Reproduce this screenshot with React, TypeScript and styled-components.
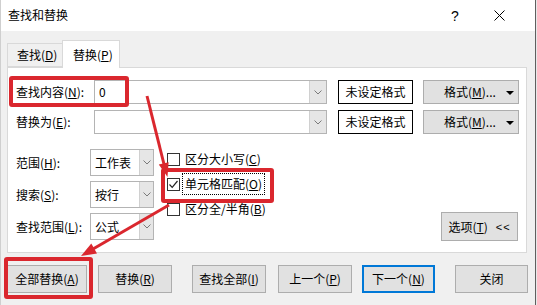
import React from 'react';
import styled, { createGlobalStyle } from 'styled-components';

const Global = createGlobalStyle`
  html, body { margin: 0; padding: 0; }
  body {
    width: 537px; height: 305px; overflow: hidden;
    background: #e8e8e8;
    font-family: "Noto Sans CJK SC", "Noto Sans", sans-serif;
    font-size: 12px; color: #000;
  }
  u { text-decoration: underline; text-underline-offset: 1px; }
`;

const RED = '#da272e';

const Window = styled.div`
  position: relative;
  width: 536px; height: 305px;
  box-sizing: border-box;
  border-left: 1px solid #cfcfcf;
  border-right: 1px solid #5f5f5f;
  background: #f0f0f0;
  display: flex; flex-direction: column;
`;

const TitleBar = styled.div`
  height: 31px; background: #fff;
  display: flex; align-items: center;
  padding-left: 7px; padding-right: 14px;
`;
const Title = styled.div`
  flex: 1; font-size: 12px; line-height: 16px; margin-top: -1px;
`;
const TitleBtn = styled.div`
  width: 44px; height: 31px;
  display: flex; align-items: center; justify-content: center;
  font-family: "Liberation Sans", sans-serif; font-size: 14px;
`;

const TabRow = styled.div`
  height: 36px; display: flex; align-items: flex-end;
  padding-left: 6px;
`;
const Tab = styled.div<{ $active?: boolean }>`
  box-sizing: border-box;
  height: ${p => (p.$active ? 28 : 24)}px;
  width: ${p => (p.$active ? 58 : 56)}px;
  background: ${p => (p.$active ? '#fff' : '#f0f0f0')};
  border: 1px solid #d9d9d9;
  border-bottom: ${p => (p.$active ? 'none' : '1px solid #d9d9d9')};
  margin-bottom: ${p => (p.$active ? -1 : 0)}px;
  margin-left: ${p => (p.$active ? -1 : 0)}px;
  position: relative; z-index: ${p => (p.$active ? 2 : 1)};
  display: flex; align-items: center;
  padding-left: ${p => (p.$active ? 10 : 9)}px;
  padding-top: ${p => (p.$active ? 1 : 0)}px;
  line-height: 16px;
`;

const Panel = styled.div`
  box-sizing: border-box;
  margin: 0 8px 0 6px;
  height: 186px;
  background: #fff;
  border: 1px solid #d9d9d9;
  padding: 12px 0 0 8px;
  display: flex; flex-direction: column;
`;

const FieldRow = styled.div`
  display: flex; align-items: center;
  height: 24px; margin-bottom: 6px;
`;
const Label = styled.div<{ $w: number }>`
  width: ${p => p.$w}px; flex: none; line-height: 16px;
`;
const Combo = styled.div<{ $w: number; $h: number }>`
  box-sizing: border-box;
  width: ${p => p.$w}px; height: ${p => p.$h}px;
  border: 1px solid #b4b4b4;
  display: flex; flex: none;
  background: #fff;
`;
const ComboText = styled.div`
  flex: 1; display: flex; align-items: center;
  padding-left: 4px; line-height: 16px;
`;
const ComboArrow = styled.div<{ $w: number }>`
  width: ${p => p.$w}px; flex: none;
  background: #e6e6e6;
  border-left: 1px solid #d0d0d0;
  display: flex; align-items: center; justify-content: center;
`;
const FormatPreview = styled.div`
  box-sizing: border-box;
  width: 75px; height: 24px; margin-left: 11px;
  border: 1px solid #000;
  display: flex; align-items: center; justify-content: center;
  line-height: 16px;
`;
const FormatButton = styled.div`
  box-sizing: border-box;
  width: 96px; height: 24px; margin-left: 10px;
  background: #e1e1e1; border: 1px solid #adadad;
  display: flex; align-items: center;
  padding-left: 20px; line-height: 16px;
  position: relative;
`;
const Caret = styled.div`
  position: absolute; right: 4px; top: 10px;
  width: 0; height: 0;
  border-left: 4px solid transparent; border-right: 4px solid transparent;
  border-top: 4px solid #000;
`;

const Options = styled.div`
  display: flex; margin-top: 9px; height: 91px;
`;
const SelectCol = styled.div`
  display: flex; flex-direction: column; gap: 5px;
`;
const SelectRow = styled.div`
  display: flex; align-items: center; height: 27px;
`;
const CheckCol = styled.div`
  display: flex; flex-direction: column; gap: 5px;
  margin-left: 13px;
`;
const CheckRow = styled.div`
  display: flex; align-items: center; height: 20px;
`;
const Box = styled.div`
  box-sizing: border-box;
  width: 13px; height: 13px; flex: none;
  border: 1px solid #333; background: #fff;
  display: flex; align-items: center; justify-content: center;
`;
const CheckLabel = styled.div<{ $focus?: boolean }>`
  margin-left: 2px; padding: 2px 2px;
  border: 1px dotted ${p => (p.$focus ? '#000' : 'transparent')};
  line-height: 16px; white-space: nowrap;
`;
const OptionsButton = styled.div`
  box-sizing: border-box;
  margin-left: auto; margin-right: 8px; align-self: flex-end;
  width: 77px; height: 29px;
  background: #e1e1e1; border: 1px solid #adadad;
  display: flex; align-items: center; justify-content: center;
  line-height: 16px; margin-bottom: -1px;
`;
const Lt = styled.span`
  font-family: "Liberation Sans", sans-serif; font-size: 11px; margin-left: 8px; letter-spacing: 1px;
`;

const BottomBar = styled.div`
  display: flex; padding: 12px 0 0 6px;
`;
const Button = styled.div<{ $w: number; $ml: number; $default?: boolean }>`
  box-sizing: border-box;
  width: ${p => p.$w}px; height: 28px; margin-left: ${p => p.$ml}px;
  background: #e1e1e1;
  border: ${p => (p.$default ? '2px solid #0078d7' : '1px solid #adadad')};
  display: flex; align-items: center; justify-content: center;
  line-height: 16px;
`;

const Highlight = styled.div<{ $x: number; $y: number; $w: number; $h: number }>`
  position: absolute; box-sizing: border-box;
  left: ${p => p.$x}px; top: ${p => p.$y}px;
  width: ${p => p.$w}px; height: ${p => p.$h}px;
  border: 4px solid ${RED}; border-radius: 3px;
  pointer-events: none;
`;
const ArrowLayer = styled.svg`
  position: absolute; left: 0; top: 0; pointer-events: none;
`;

const Chevron = () => (
  <svg width="8" height="5" viewBox="0 0 8 5">
    <polyline points="0.5,0.5 4,4 7.5,0.5" fill="none" stroke="#7a7a7a" strokeWidth="1" />
  </svg>
);

const Check = () => (
  <svg width="11" height="11" viewBox="0 0 11 11">
    <polyline points="1.5,5.5 4.2,8.3 9.5,2" fill="none" stroke="#222" strokeWidth="1.2" />
  </svg>
);

const CloseIcon = () => (
  <svg width="11" height="11" viewBox="0 0 11 11">
    <line x1="0.5" y1="0.5" x2="10.5" y2="10.5" stroke="#000" strokeWidth="1" />
    <line x1="10.5" y1="0.5" x2="0.5" y2="10.5" stroke="#000" strokeWidth="1" />
  </svg>
);

export default function App() {
  return (
    <>
      <Global />
      <Window>
        <TitleBar>
          <Title>查找和替换</Title>
          <TitleBtn>?</TitleBtn>
          <TitleBtn><CloseIcon /></TitleBtn>
        </TitleBar>
        <TabRow>
          <Tab>查找(<u>D</u>)</Tab>
          <Tab $active>替换(<u>P</u>)</Tab>
        </TabRow>
        <Panel>
          <FieldRow>
            <Label $w={78}>查找内容(<u>N</u>):</Label>
            <Combo $w={233} $h={24}>
              <ComboText>0</ComboText>
              <ComboArrow $w={16}><Chevron /></ComboArrow>
            </Combo>
            <FormatPreview>未设定格式</FormatPreview>
            <FormatButton>格式(<u>M</u>)...<Caret /></FormatButton>
          </FieldRow>
          <FieldRow>
            <Label $w={78}>替换为(<u>E</u>):</Label>
            <Combo $w={233} $h={24}>
              <ComboText></ComboText>
              <ComboArrow $w={16}><Chevron /></ComboArrow>
            </Combo>
            <FormatPreview>未设定格式</FormatPreview>
            <FormatButton>格式(<u>M</u>)...<Caret /></FormatButton>
          </FieldRow>
          <Options>
            <SelectCol>
              <SelectRow>
                <Label $w={74}>范围(<u>H</u>):</Label>
                <Combo $w={64} $h={27}>
                  <ComboText>工作表</ComboText>
                  <ComboArrow $w={13}><Chevron /></ComboArrow>
                </Combo>
              </SelectRow>
              <SelectRow>
                <Label $w={74}>搜索(<u>S</u>):</Label>
                <Combo $w={64} $h={27}>
                  <ComboText>按行</ComboText>
                  <ComboArrow $w={13}><Chevron /></ComboArrow>
                </Combo>
              </SelectRow>
              <SelectRow>
                <Label $w={74}>查找范围(<u>L</u>):</Label>
                <Combo $w={64} $h={27}>
                  <ComboText>公式</ComboText>
                  <ComboArrow $w={13}><Chevron /></ComboArrow>
                </Combo>
              </SelectRow>
            </SelectCol>
            <CheckCol>
              <CheckRow>
                <Box />
                <CheckLabel>区分大小写(<u>C</u>)</CheckLabel>
              </CheckRow>
              <CheckRow>
                <Box><Check /></Box>
                <CheckLabel $focus>单元格匹配(<u>O</u>)</CheckLabel>
              </CheckRow>
              <CheckRow>
                <Box />
                <CheckLabel>区分全/半角(<u>B</u>)</CheckLabel>
              </CheckRow>
            </CheckCol>
            <OptionsButton>选项(<u>T</u>)<Lt>&lt;&lt;</Lt></OptionsButton>
          </Options>
        </Panel>
        <BottomBar>
          <Button $w={80} $ml={0}>全部替换(<u>A</u>)</Button>
          <Button $w={74} $ml={11}>替换(<u>R</u>)</Button>
          <Button $w={74} $ml={20}>查找全部(<u>I</u>)</Button>
          <Button $w={74} $ml={12}>上一个(<u>P</u>)</Button>
          <Button $w={73} $ml={10} $default>下一个(<u>N</u>)</Button>
          <Button $w={73} $ml={20}>关闭</Button>
        </BottomBar>

        <Highlight $x={8} $y={76} $w={120} $h={31} />
        <Highlight $x={160} $y={168} $w={113} $h={35} />
        <Highlight $x={3} $y={257} $w={89} $h={42} />
        <ArrowLayer width="537" height="305" viewBox="0 0 537 305">
          <line x1="146" y1="96" x2="163.2" y2="165" stroke={RED} strokeWidth="3" />
          <polygon points="166.5,177 167.6,162.2 157.8,164.6" fill={RED} />
          <line x1="168" y1="205" x2="92" y2="249" stroke={RED} strokeWidth="3" />
          <polygon points="80,256 96,253.5 90.3,243.5" fill={RED} />
        </ArrowLayer>
      </Window>
    </>
  );
}
